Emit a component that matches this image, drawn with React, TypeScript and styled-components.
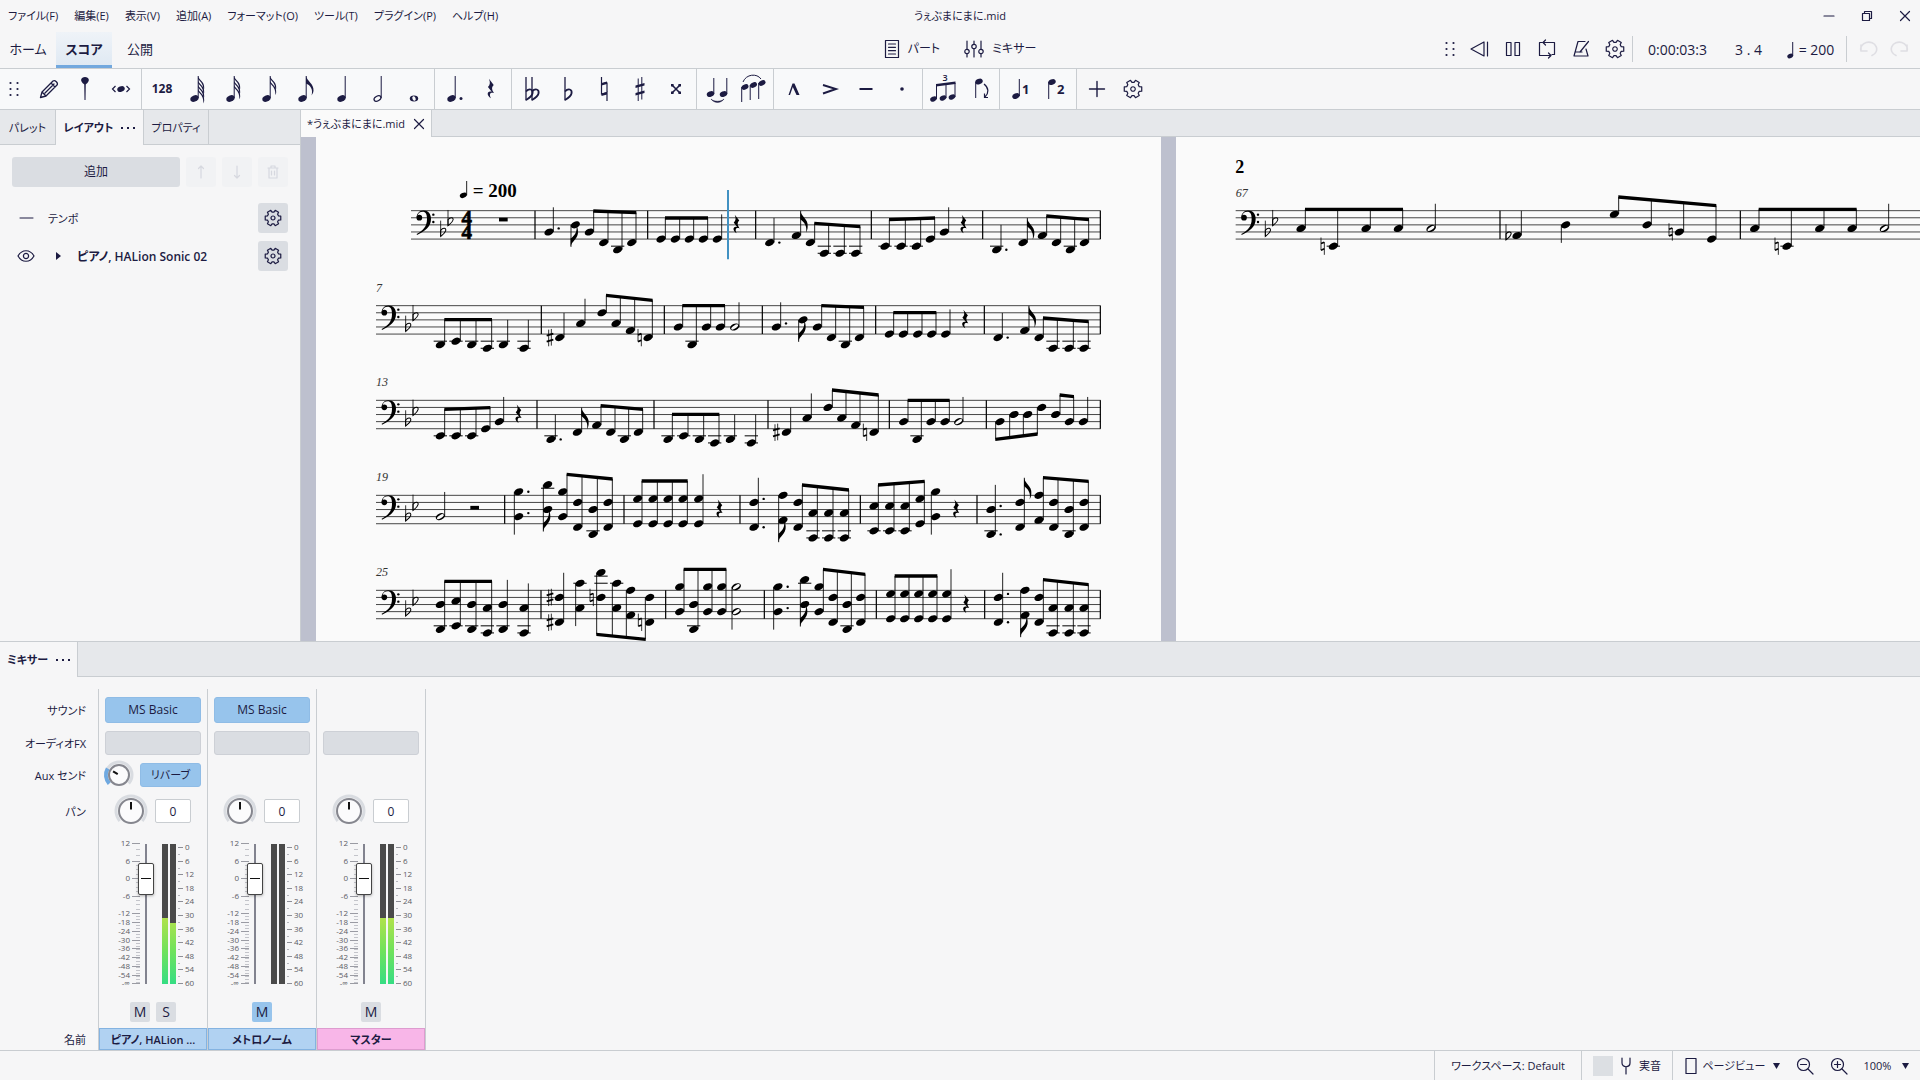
import React from "react";
import styled, { createGlobalStyle, css } from "styled-components";

const ink = "#1c1b42";
const line = "#c9cdd1";
const surface = "#f6f6f7";
const strip = "#e6e8eb";
const accent = "#97c4ec";
const soft = "#dadde2";

const Global = createGlobalStyle`
  * { box-sizing: border-box; }
  body {
    margin: 0;
    background: ${surface};
    color: ${ink};
    font: 12px/16px "Open Sans", "Noto Sans CJK JP", sans-serif;
    font-feature-settings: "palt";
    overflow: hidden;
  }
  button, input, select { font: inherit; font-feature-settings: inherit; color: inherit; }
  button { border: 0; padding: 0; background: none; cursor: pointer; }
  svg { display: block; flex: none; overflow: visible; }
`;

const App_ = styled.div`
  display: flex;
  flex-direction: column;
  height: 100vh;
`;

/* ---------- header ---------- */

const ThreePart = styled.header<{ $h: number; $line?: boolean }>`
  display: grid;
  grid-template-columns: 1fr auto 1fr;
  align-items: center;
  height: ${(p) => p.$h}px;
  flex: none;
  font-size: 11px;
  ${(p) => p.$line && css`border-bottom: 1px solid ${line};`}
`;
const MenuList = styled.nav`
  display: flex;
  gap: 16px;
  padding-left: 8px;
`;
const MenuItem = styled.button`
  white-space: nowrap;
`;
const WindowButtons = styled.div`
  display: flex;
  justify-content: flex-end;
`;
const WindowButton = styled.button`
  display: grid;
  place-items: center;
  width: 38px;
  height: 30px;
  &:last-child {
    width: 34px;
    padding-left: 4px;
  }
`;
const PageTabs = styled.nav`
  display: flex;
  align-self: stretch;
`;
const PageTab = styled.a<{ $on?: boolean }>`
  display: grid;
  place-items: center;
  width: 56px;
  font-size: 13px;
  color: inherit;
  text-decoration: none;
  font-weight: ${(p) => (p.$on ? 600 : 400)};
  border-bottom: 3px solid ${(p) => (p.$on ? "#72a8de" : "transparent")};
  background: ${(p) => (p.$on ? "linear-gradient(#eff3f8, #dfe9f3)" : "none")};
`;
const PanelToggles = styled.div`
  display: flex;
  gap: 24px;
  padding-bottom: 2px;
`;
const PanelToggle = styled.button`
  display: flex;
  align-items: center;
  gap: 8px;
  font-size: 12px;
`;
const Transport = styled.div`
  display: flex;
  align-items: center;
  justify-content: flex-end;
  padding: 0 6px 2px 0;
`;
const TransportButton = styled.button<{ $w?: number; $off?: boolean }>`
  display: grid;
  place-items: center;
  width: ${(p) => p.$w ?? 34}px;
  height: 30px;
  opacity: ${(p) => (p.$off ? 0.1 : 1)};
`;
const Rule = styled.span<{ $after?: number }>`
  width: 1px;
  height: 26px;
  margin-right: ${(p) => p.$after ?? 0}px;
  background: ${line};
`;
const Readout = styled.span<{ $w: number }>`
  display: flex;
  align-items: center;
  justify-content: center;
  gap: 4px;
  width: ${(p) => p.$w}px;
  padding-top: 2px;
  font-size: 14px;
  white-space: pre;
`;

/* ---------- note toolbar ---------- */

const Toolbar = styled.div`
  display: flex;
  flex: none;
  height: 41px;
  border-bottom: 1px solid ${line};
`;
const ToolGroup = styled.div<{ $last?: boolean }>`
  display: flex;
  padding: 0 2px;
  border-right: ${(p) => (p.$last ? 0 : 1)}px solid ${line};
  background: #f8f9fa;
  &:first-child { padding-left: 0; }
  ${(p) => p.$last && css`background: none;`}
`;
const ToolButton = styled.button<{ $narrow?: boolean }>`
  display: grid;
  place-items: center;
  width: ${(p) => (p.$narrow ? 31 : 36)}px;
  padding-right: ${(p) => (p.$narrow ? 3 : 0)}px;
  font-weight: 700;
`;

/* ---------- work area ---------- */

const Work = styled.main`
  display: flex;
  flex: 1;
  min-height: 0;
`;
const Side = styled.aside`
  width: 301px;
  flex: none;
  border-right: 1px solid ${line};
`;
const TabBar = styled.div<{ $h: number }>`
  display: flex;
  flex: none;
  height: ${(p) => p.$h}px;
  background: linear-gradient(${line}, ${line}) bottom / 100% 1px no-repeat ${strip};
`;
const Tab = styled.button<{ $on?: boolean; $w: number }>`
  display: flex;
  align-items: center;
  justify-content: center;
  gap: 8px;
  width: ${(p) => p.$w}px;
  border-right: 1px solid ${line};
  white-space: nowrap;
  font-size: 11px;
  font-weight: ${(p) => (p.$on ? 600 : 400)};
  background: ${(p) => (p.$on ? surface : "none")};
`;
const DocumentTab = styled(Tab)`
  background: #fafafa;
`;
const SideActions = styled.div`
  display: flex;
  gap: 6px;
  padding: 12px;
`;
const AddButton = styled.button`
  flex: 1;
  height: 30px;
  border-radius: 3px;
  background: ${soft};
`;
const SquareButton = styled.button<{ $off?: boolean }>`
  display: grid;
  place-items: center;
  width: 30px;
  height: 30px;
  border-radius: 3px;
  background: ${(p) => (p.$off ? "#f1f2f4" : soft)};
  color: ${(p) => (p.$off ? "#d6d8df" : ink)};
`;
const LayerRow = styled.div`
  display: flex;
  align-items: center;
  height: 38px;
  padding: 0 12px 0 16px;
`;
const RowIcon = styled.button<{ $w: number }>`
  display: grid;
  place-items: center start;
  width: ${(p) => p.$w}px;
  height: 30px;
`;
const LayerName = styled.span<{ $bold?: boolean }>`
  flex: 1;
  padding-top: 2px;
  font-size: ${(p) => (p.$bold ? 12 : 11)}px;
  font-weight: ${(p) => (p.$bold ? 600 : 400)};
`;
const Editor = styled.section`
  display: flex;
  flex-direction: column;
  flex: 1;
  min-width: 0;
`;
const Desk = styled.div`
  display: flex;
  flex: 1;
  min-height: 0;
  gap: 15px;
  padding-left: 15px;
  overflow: hidden;
  background: #bdc0ce;
`;
const Paper = styled.article<{ $rest?: boolean }>`
  overflow: hidden;
  background: #fafafa;
  ${(p) => (p.$rest ? css`flex: 1;` : css`flex: none;`)}
`;

/* ---------- mixer ---------- */

const MixerPanel = styled.section`
  display: flex;
  flex-direction: column;
  flex: none;
  border-top: 1px solid ${line};
`;
const MixerBody = styled.div`
  display: flex;
  padding-top: 12px;
`;
const columnRows = css`
  display: grid;
  grid-template-columns: minmax(0, 1fr);
  grid-template-rows: 34px 32px 32px 40px 165px 32px 22px;
  align-items: center;
  padding-top: 4px;
`;
const Labels = styled.div`
  ${columnRows}
  width: 99px;
  padding-right: 12px;
  font-size: 11px;
  text-align: right;
  white-space: nowrap;
  border-right: 1px solid ${line};
  span { padding-top: 2px; }
`;
const Channel = styled.div`
  ${columnRows}
  width: 109px;
  border-right: 1px solid ${line};
`;
const Cell = styled.div<{ $gap?: number }>`
  display: flex;
  align-items: center;
  justify-content: center;
  gap: ${(p) => p.$gap ?? 0}px;
  padding: 0 6px;
`;
const Slot = styled.button<{ $tone: "blue" | "grey"; $h: number; $w?: number }>`
  width: ${(p) => p.$w ?? 96}px;
  height: ${(p) => p.$h}px;
  border: 1px solid ${(p) => (p.$tone === "blue" ? "#8fbce6" : "#cdd0d6")};
  border-radius: 3px;
  background: ${(p) => (p.$tone === "blue" ? accent : soft)};
  font-size: ${(p) => (p.$w ? 11 : 12)}px;
`;
const KnobBox = styled.label`
  position: relative;
  display: block;
`;
const KnobInput = styled.input`
  position: absolute;
  inset: 0;
  width: 100%;
  height: 100%;
  margin: 0;
  opacity: 0;
`;
const PanValue = styled.input`
  width: 36px;
  height: 24px;
  padding: 0;
  border: 1px solid ${line};
  border-radius: 2px;
  background: #fff;
  text-align: center;
`;
const FaderCell = styled.div`
  display: flex;
  align-items: center;
  padding-left: 17px;
`;
const Fader = styled.input`
  appearance: none;
  writing-mode: vertical-lr;
  direction: rtl;
  width: 16px;
  height: 140px;
  margin: 0 8px 0 -2px;
  background: linear-gradient(#82838f, #82838f) center / 2px 100% no-repeat;
  &::-webkit-slider-thumb {
    appearance: none;
    width: 16px;
    height: 32px;
    border: 1px solid #444;
    border-radius: 2px;
    background: linear-gradient(#111, #111) center / 10px 1px no-repeat #fff;
    box-shadow: 0 1px 3px rgba(0, 0, 0, 0.3);
  }
`;
const ScaleText = styled.text`
  font-size: 8px;
  fill: #5b5c65;
`;
const SmallToggle = styled.button<{ $on?: boolean }>`
  width: 20px;
  height: 20px;
  border-radius: 2px;
  font-size: 14px;
  line-height: 20px;
  background: ${(p) => (p.$on ? accent : soft)};
`;
const ChannelName = styled.div<{ $pink?: boolean }>`
  height: 22px;
  padding: 0 8px;
  border: 1px solid ${(p) => (p.$pink ? "#dd9ccf" : "#84b3e1")};
  background: ${(p) => (p.$pink ? "#f8b6e8" : "#b1d2f2")};
  font-size: 11px;
  font-weight: 600;
  line-height: 21px;
  text-align: center;
  white-space: nowrap;
`;

/* ---------- status bar ---------- */

const Status = styled.footer`
  display: flex;
  justify-content: flex-end;
  flex: none;
  height: 30px;
  font-size: 11px;
  border-top: 1px solid ${line};
`;
const StatusPart = styled.div<{ $w: number; $gap: number }>`
  display: flex;
  align-items: center;
  justify-content: center;
  gap: ${(p) => p.$gap}px;
  width: ${(p) => p.$w}px;
  white-space: nowrap;
  border-left: 1px solid ${line};
`;
const Swatch = styled.span`
  width: 20px;
  height: 20px;
  background: #dcdfe3;
`;
const DropLabel = styled.label<{ $gap: number }>`
  display: flex;
  align-items: center;
  gap: ${(p) => p.$gap}px;
`;
const Drop = styled.select`
  appearance: none;
  border: 0;
  padding: 0;
  background: none;
`;

/* ---------- interface icons ---------- */

const Svg = ({ w, h = w, children, sw = 1.2 }: { w: number; h?: number; sw?: number; children: React.ReactNode }) => (
  <svg width={w} height={h} viewBox={`${-w / 2} ${-h / 2} ${w} ${h}`} fill="none" stroke="currentColor" strokeWidth={sw} strokeLinecap="round" strokeLinejoin="round" aria-hidden>
    {children}
  </svg>
);

const gearPath = (r: number) => {
  const pts: string[] = [];
  for (let k = 0; k < 6; k++) {
    [[-21, 0.74], [-14, 1], [14, 1], [21, 0.74]].forEach(([d, f]) => {
      const a = ((k * 60 + d) * Math.PI) / 180;
      pts.push(`${(Math.cos(a) * r * f).toFixed(2)},${(Math.sin(a) * r * f).toFixed(2)}`);
    });
  }
  return `M${pts.join("L")}Z`;
};
const Gear = ({ r = 8 }: { r?: number }) => (
  <Svg w={20}><path d={gearPath(r)} /><circle r={r / 4} /></Svg>
);
const Grip = () => (
  <svg width="10" height="16" viewBox="-5 -8 10 16" fill={ink} aria-hidden>
    {[-3.5, 3.5].map((x) => [-6, 0, 6].map((y) => <circle key={`${x}${y}`} cx={x} cy={y} r="1.1" />))}
  </svg>
);
const Dots = () => (
  <svg width="14" height="4" viewBox="0 0 14 4" fill={ink} aria-hidden>
    <rect x="0" y="1" width="2" height="2" /><rect x="6" y="1" width="2" height="2" /><rect x="12" y="1" width="2" height="2" />
  </svg>
);
const Caret = () => (
  <svg width="7" height="6" viewBox="0 0 7 6" fill={ink} aria-hidden><path d="M0 0H7L3.5 6Z" /></svg>
);
const Cross = () => <Svg w={12}><path d="M-4.500-4.500L4.500 4.500M4.500-4.500L-4.500 4.500" /></Svg>;

/* Toolbar note glyphs share one 32px box centred on the button. */
const Glyph = ({ children }: { children: React.ReactNode }) => (
  <svg width="32" height="32" viewBox="-16 -16 32 32" fill={ink} stroke="none" aria-hidden>{children}</svg>
);
const Head = ({ x, y, s = 1 }: { x: number; y: number; s?: number }) => (
  <ellipse rx={4.3 * s} ry={3 * s} transform={`translate(${x} ${y}) rotate(-24)`} />
);
const Stem = ({ x, a, b }: { x: number; a: number; b: number }) => <rect x={x - 0.5} y={a} width="1" height={b - a} />;

const FlaggedNote = ({ flags }: { flags: number }) => (
  <Glyph>
    <Head x={-3.5} y={9.5} />
    <Stem x={0.2} a={-13} b={9} />
    {flags === 1 ? (
      <path d="M0-13C1-8 8-5 7.500 1.500C7.400 3.500 6.500 5 5.500 6.500C7.500 0 4-4 0-5.500Z" />
    ) : (
      Array.from({ length: flags }, (_, i) => (
        <path key={i} d={`M0 ${-13 + i * 4.2}c.6 4 6.600 5 6.200 12c-.2 1.500-.4 2-.8 2.800c.2-6-2-8.500-5.400-11.800z`} />
      ))
    )}
  </Glyph>
);
const restPath = "M-6-30L8-12C1-5 2 1 9 12C-1 8-7 14 0 27C-15 18-11 3 2 8L-9-6C-2-12-2-20-6-30Z";
const flatBowl = "M0-1C4-6 9-4.500 8-.5C7 3.500 3 6 0 8.500Z";

const Flat = ({ x = 0 }: { x?: number }) => (
  <g transform={`translate(${x} 2)`} fill="none" stroke={ink} strokeWidth="1.300">
    <path d="M-3-14V9.500" /><path d="M-3 .5C0-3 4.500-2 3.500 2.500C3 5-.5 7.500-3 9" strokeWidth="1.800" />
  </g>
);

const tools: { name: string; icon: React.ReactNode }[][] = [
  [
    { name: "音符入力", icon: <Svg w={22} sw={1.3}><path d="M-8.500 8.500L-7 3L4-8C6-9.500 9.500-6 8-4L-3 7ZM-7 3L-3 7M-4 4L5-5M2-6L6-2" /></Svg> },
    { name: "ピン", icon: <Glyph><path d="M0 11.500L-.5-4.500C-6-8-4-12 0-12S6-8 .5-4.500Z" /><Stem x={0} a={-5} b={11} /></Glyph> },
    { name: "リズム", icon: <Glyph><Head x={0} y={0} s={0.9} /><path d="M-5.500-3L-8.500 0L-5.500 3M5.500-3L8.500 0L5.500 3" fill="none" stroke={ink} strokeWidth="1.200" /></Glyph> },
  ],
  [
    { name: "128分音符", icon: "128" },
    { name: "64分音符", icon: <FlaggedNote flags={4} /> },
    { name: "32分音符", icon: <FlaggedNote flags={3} /> },
    { name: "16分音符", icon: <FlaggedNote flags={2} /> },
    { name: "8分音符", icon: <FlaggedNote flags={1} /> },
    { name: "4分音符", icon: <Glyph><Head x={-0.5} y={9.5} /><Stem x={3.2} a={-13} b={9} /></Glyph> },
    { name: "2分音符", icon: <Glyph><ellipse rx="3.700" ry="2.400" transform="translate(-.5 9.500) rotate(-30)" fill="none" stroke={ink} strokeWidth="1.200" /><Stem x={3.2} a={-13} b={9} /></Glyph> },
    { name: "全音符", icon: <Glyph><ellipse cy="9.500" rx="4.200" ry="2.900" /><ellipse cy="9.500" rx="1.600" ry="2.400" transform="rotate(-20 0 9.500)" fill="#f8f9fa" /></Glyph> },
  ],
  [
    { name: "付点", icon: <Glyph><Head x={-3.5} y={9.5} /><Stem x={0.2} a={-13} b={9} /><circle cx="6" cy="9.500" r="1.500" /></Glyph> },
    { name: "休符", icon: <Glyph><path d={restPath} transform="scale(.34)" /></Glyph> },
  ],
  [
    { name: "ダブルフラット", icon: <Glyph><Flat x={-3} /><Flat x={3} /></Glyph> },
    { name: "フラット", icon: <Glyph><Flat /></Glyph> },
    { name: "ナチュラル", icon: <Glyph><path d="M-2.500-12V5L3 3.500V12M3-6.500V3.500M-2.500-5L3-6.500" fill="none" stroke={ink} strokeWidth="1.200" /><path d="M-2.500-6L3-7.500V-5L-2.500-3.500ZM-2.500 4.500L3 3V5.500L-2.500 7Z" /></Glyph> },
    { name: "シャープ", icon: <Glyph><Stem x={-1.8} a={-10.5} b={12} /><Stem x={1.8} a={-12} b={10.5} /><path d="M-4.500-3.500L4.500-6V-3.500L-4.500-1ZM-4.500 4L4.500 1.500V4L-4.500 6.500Z" /></Glyph> },
    { name: "ダブルシャープ", icon: <Glyph><path d="M-4-4L4 4M4-4L-4 4" stroke={ink} strokeWidth="1.600" /><path d="M-5-5h2.600v2.600h-2.600zM2.400-5h2.600v2.600h-2.600zM-5 2.400h2.600v2.600h-2.600zM2.400 2.400h2.600v2.600h-2.600z" /></Glyph> },
  ],
  [
    { name: "タイ", icon: <Glyph><Head x={-6.5} y={5} s={0.9} /><Stem x={-3.2} a={-11} b={5} /><Head x={6.5} y={5} s={0.9} /><Stem x={9.8} a={-11} b={5} /><path d="M-6 10C-3 14.500 4 14.500 7 10C4 13 -3 13 -6 10Z" stroke={ink} strokeWidth=".5" /></Glyph> },
    { name: "スラー", icon: <Glyph><Head x={-8} y={-2} s={0.85} /><Head x={0.5} y={-4} s={0.85} /><Head x={9} y={-6} s={0.85} /><Stem x={-11.3} a={-2} b={13} /><Stem x={-2.8} a={-4} b={11} /><Stem x={5.7} a={-6} b={10} /><path d="M-10-7C-7-15 4-16 8-10" fill="none" stroke={ink} /></Glyph> },
  ],
  [
    { name: "マルカート", icon: <Glyph><path d="M-5.500 6L-1.500-5.500H.5L5.500 6H2.500L-1.200-2L-4 6Z" /></Glyph> },
    { name: "アクセント", icon: <Glyph><path d="M-7-4L6 0L-7 4.500" fill="none" stroke={ink} strokeWidth="1.900" /></Glyph> },
    { name: "テヌート", icon: <Glyph><rect x="-6.500" y="-1" width="13" height="2" /></Glyph> },
    { name: "スタッカート", icon: <Glyph><circle r="1.800" /></Glyph> },
  ],
  [
    { name: "連符", icon: <Glyph><Head x={-9.500} y={10} s={0.8} /><Head x={0} y={9} s={0.8} /><Head x={9} y={8} s={0.8} /><Stem x={-6.5} a={-4} b={10} /><Stem x={3} a={-5} b={9} /><Stem x={12} a={-6} b={8} /><path d="M-7-5L12.500-7.500V-5L-7-2.500Z" /><text x="2" y="-8" fontSize="9" fontWeight="600" textAnchor="middle">3</text></Glyph> },
    { name: "上下反転", icon: <Glyph><Head x={0} y={-7.500} s={0.9} /><Stem x={-3.3} a={-7} b={9} /><path d="M5-5C10-1 10 4 6 8M5.500 4.500V8.500H9" fill="none" stroke={ink} strokeWidth="1.200" /></Glyph> },
  ],
  [
    { name: "声部1", icon: <Glyph><Head x={-4} y={7} s={0.9} /><Stem x={-0.7} a={-10} b={7} /><text x="2" y="5" fontSize="13" fontWeight="700">1</text></Glyph> },
    { name: "声部2", icon: <Glyph><Head x={-4} y={-7} s={0.9} /><Stem x={-7.3} a={-7} b={10} /><text x="1" y="5" fontSize="13" fontWeight="700">2</text></Glyph> },
  ],
  [
    { name: "追加", icon: <Svg w={18} sw={1.4}><path d="M-7.500 0H7.500M0-7.500V7.500" /></Svg> },
    { name: "設定", icon: <Gear r={9} /> },
  ],
];

/* ---------- engraving ---------- */

/* Score units are a third of a pixel. A staff space is 21.3 units and
   pitches count half spaces upwards from the bottom staff line. */
const SPACE = 21.3;
const yOf = (p: number) => 4 * SPACE - (p * SPACE) / 2;
const STEM = 74;
const SIDE = 13;

const Notehead = ({ x, p, hollow }: { x: number; p: number; hollow?: boolean }) => {
  const ledgers: number[] = [];
  for (let l = -2; l >= p; l -= 2) ledgers.push(l);
  for (let l = 10; l <= p; l += 2) ledgers.push(l);
  return (
    <g>
      {ledgers.map((l) => <path key={l} d={`M${x - 20} ${yOf(l)}h40`} stroke="#000" strokeWidth="3" />)}
      <g transform={`translate(${x} ${yOf(p)}) rotate(-24)`}>
        <ellipse rx="14.500" ry="9.800" />
        {hollow && <ellipse rx="12" ry="4.500" transform="rotate(-10)" fill="#fafafa" />}
      </g>
    </g>
  );
};

const VLine = ({ x, a, b, w = 2.6 }: { x: number; a: number; b: number; w?: number }) => (
  <path d={`M${x} ${a}V${b}`} stroke="#000" strokeWidth={w} />
);

const Accidental = ({ kind, x, p }: { kind: string; x: number; p: number }) => (
  <g transform={`translate(${x} ${yOf(p)})`} fill="none" stroke="#000" strokeWidth="2.400">
    {kind === "b" && <g><path d="M-7-34V13" /><path d={flatBowl} transform="translate(-7 -3) scale(1.900)" strokeWidth="1.600" /></g>}
    {kind === "n" && <g><path d="M-5-26V12M5-12V26" /><path d="M-5-8L5-12M-5 12L5 8" strokeWidth="5" /></g>}
    {kind === "#" && <g><path d="M-4-24V26M4-26V24" /><path d="M-10-6L10-12M-10 12L10 6" strokeWidth="5.500" /></g>}
  </g>
);

const parseNote = (s: string) => {
  const dot = s.endsWith(".");
  const [x, ps] = s.replace(/\.$/, "").split(":");
  return { x: Number(x), ps: ps.split("+").map(Number), dot };
};

/* One item of notation. First letter: | bar, r/W/V rests, # n b accidentals,
   q/h/e stem up, Q/H/E stem down, U/D beamed group with its two beam heights. */
const Mark = ({ src }: { src: string }) => {
  const k = src[0];
  const rest = src.slice(1);
  if (k === "|") return <VLine x={Number(rest)} a={0} b={4 * SPACE} w={3.6} />;
  if (k === "r") return <path d={restPath} transform={`translate(${rest} ${2 * SPACE - 1}) scale(.98)`} />;
  if (k === "W") return <rect x={Number(rest) - 13} y={SPACE} width="26" height="11" />;
  if (k === "V") return <rect x={Number(rest) - 13} y={2 * SPACE - 11} width="26" height="11" />;
  if (k === "#" || k === "n" || k === "b") {
    const n = parseNote(rest);
    return <>{n.ps.map((p) => <Accidental key={p} kind={k} x={n.x} p={p} />)}</>;
  }
  if (k === "U" || k === "D") {
    const [, y1, y2, ...ns] = src.split(" ");
    const notes = ns.map(parseNote);
    const dx = k === "U" ? SIDE : -SIDE;
    const a = notes[0].x + dx;
    const b = notes[notes.length - 1].x + dx;
    const at = (x: number) => Number(y1) + ((Number(y2) - Number(y1)) * (x - a)) / (b - a);
    return (
      <g>
        {notes.map((n) => (
          <g key={n.x}>
            {n.ps.map((p) => <Notehead key={p} x={n.x} p={p} />)}
            <VLine x={n.x + dx} a={at(n.x + dx)} b={yOf(k === "U" ? Math.min(...n.ps) : Math.max(...n.ps))} />
          </g>
        ))}
        <path d={`M${a - 1} ${Number(y1) - 5}L${b + 1} ${Number(y2) - 5}v10L${a - 1} ${Number(y1) + 5}Z`} />
      </g>
    );
  }
  const n = parseNote(rest);
  const up = k === k.toLowerCase();
  const lo = yOf(Math.min(...n.ps));
  const hi = yOf(Math.max(...n.ps));
  const sx = n.x + (up ? SIDE : -SIDE);
  const end = up ? Math.min(hi - STEM, 2 * SPACE) : lo + (k === "E" ? 66 : 54);
  return (
    <g>
      {n.ps.map((p) => <Notehead key={p} x={n.x} p={p} hollow={k.toLowerCase() === "h"} />)}
      <VLine x={sx} a={up ? end : hi} b={up ? lo : end} />
      {k.toLowerCase() === "e" && (
        <path d="M0 0C2 16 24 26 22 46C22 54 20 60 17 65C21 46 12 34 0 25Z" transform={`translate(${sx - 1} ${end}) scale(1 ${up ? 1 : -1})`} />
      )}
      {n.dot && n.ps.map((p) => <circle key={p} cx={n.x + 29} cy={yOf(p % 2 === 0 ? p + 1 : p)} r="3.600" />)}
    </g>
  );
};

type Part = { at: number; marks: string[] };
const System = ({ y, x1, x2, parts, number, clefX }: { y: number; x1: number; x2: number; parts: Part[]; number?: string; clefX: number }) => (
  <g transform={`translate(0 ${y})`}>
    {[0, 1, 2, 3, 4].map((i) => <path key={i} d={`M${x1} ${i * SPACE}H${x2}`} stroke="#222" strokeWidth="2.500" />)}
    {number && <text x={x1} y="-42" fontSize="36" fontStyle="italic" fontFamily="Liberation Serif, serif" fill="#333">{number}</text>}
    <g transform={`translate(${clefX} 0)`}>
      <circle cx="8" cy="21" r="8.500" />
      <path d="M0 20C0 8 9-.5 20-.5C35-.5 43 9 43 25C43 48 25 62 1 73L0 70C19 60 31 48 31 25C31 10 27 3 18 3C10 3 4 8 3 14Z" />
      <circle cx="50" cy="12" r="3.600" /><circle cx="50" cy="34" r="3.600" />
      <Accidental kind="b" x={79} p={2} />
      <Accidental kind="b" x={101} p={5} />
    </g>
    {parts.map((part) => (
      <g key={part.at} transform={`translate(${part.at} 0)`}>
        {part.marks.map((m) => <Mark key={m} src={m} />)}
      </g>
    ))}
  </g>
);

const L = 162;
const R = 1302;
const firstPage = [
  { y: 221, x1: 285, parts: [
    { at: L, marks: ["W400", "|495", "q537:2.", "E616:4", "U 1 6 658:2 701:-1 743:-3 785:-1", "|833", "U 22 22 873:0 916:0 958:0 1000:0", "q1042:0", "r1100", "|1157"] },
    { at: R, marks: ["q59:-1.", "e139:1", "U 38 48 181:-1 223:-4 270:-4 317:-4", "|364", "U 27 22 405:-2 453:-2 499:-2 541:0", "q583:2", "r641", "|698", "q740:-3.", "e819:-1", "U 16 27 877:1 919:-1 961:-3 1003:-1", "|1051"] },
  ] },
  { y: 506, x1: 180, number: "7", parts: [
    { at: L, marks: ["U 42 42 211:-3 258:-2 305:-3 352:-4", "q400:-3", "q462:-4", "|514", "#540:-1", "q569:-1", "q632:3", "U -31 -16 696:6 738:3 781:1 834:-1", "n809:-1", "|883", "U 0 0 925:2 966:-3 1009:2 1051:2", "h1094:2", "|1177"] },
    { at: R, marks: ["q79:2.", "E159:4", "U 0 5 202:2 244:-1 286:-3 328:-1", "|377", "U 21 21 418:0 460:0 503:0 545:0", "q587:0", "r646", "|703", "q744:-1.", "e824:1", "U 37 48 867:-1 909:-4 957:-4 1002:-4", "|1051"] },
  ] },
  { y: 790, x1: 180, number: "13", parts: [
    { at: L, marks: ["U 27 22 211:-2 258:-2 305:-2 347:0", "q388:2", "r446", "|501", "q543:-3.", "e622:-1", "U 16 27 680:1 722:-1 763:-3 805:-1", "|852", "U 42 42 894:-3 941:-2 988:-3 1034:-4", "q1081:-3", "q1144:-4", "|1194"] },
    { at: R, marks: ["#79:-1", "q109:-1", "q171:3", "U -31 -16 234:6 275:3 317:1 372:-1", "n345:-1", "|418", "U 0 0 461:2 501:-3 543:2 585:2", "h626:2", "|709", "D 117 101 750:2 792:4 833:4 875:6", "U -16 -11 917:4 958:2", "q1000:2", "|1051"] },
  ] },
  { y: 1075, x1: 180, number: "19", parts: [
    { at: L, marks: ["h211:2", "V314", "|404", "Q446:2+9.", "E533:4+11", "U -63 -49 578:2+9 623:-1+6 669:-3+4 714:-1+6", "|762", "U -43 -43 803:0+7 849:0+7 894:0+7 939:0+7", "q986:0+7", "r1049", "|1110", "q1152:-1+6."] },
    { at: R, marks: ["E99:1+8", "U -31 -16 144:-1+6 189:-4+3 236:-4+3 283:-4+3", "|331", "U -31 -42 372:-2+5 419:-2+5 465:-2+5 510:0+7", "Q557:2+9", "r619", "|681", "q723:-3+4.", "e810:-1+6", "U -53 -42 867:1+8 911:-1+6 957:-3+4 1002:-1+6", "|1051"] },
  ] },
  { y: 1360, x1: 180, number: "25", parts: [
    { at: L, marks: ["U -27 -27 211:-3+4 258:-2+5 305:-3+4 352:-4+3", "q399:-3+4", "q462:-4+3", "|513", "#540:-1+6", "q568:-1+6", "Q630:3+10", "n665:6", "D 132 147 693:6+13 740:3+10 782:1+8 839:-1+6", "n810:-1", "|887", "U -63 -63 929:2+9 971:-3+4 1013:2+9 1055:2+9", "H1099:2+9", "|1183"] },
    { at: R, marks: ["Q84:2+9.", "E164:4+11", "U -63 -48 207:2+9 249:-1+6 291:-3+4 332:-1+6", "|379", "U -43 -43 422:0+7 464:0+7 506:0+7 548:0+7", "q590:0+7", "r649", "|704", "q745:-1+6.", "E825:1+8", "U -32 -17 867:-1+6 909:-4+3 957:-4+3 1002:-4+3", "|1051"] },
  ] },
];
const secondPage: Part[] = [
  { at: -63, marks: ["U -4 -4 438:3 535:-2 633:3 730:3", "n503:-2", "h828:3"] },
  { at: 672, marks: ["|300", "b325:1", "q351:1", "Q497:4", "U -41 -15 643:7 741:4 838:2 935:0", "n812:2", "|1021", "U -4 -4 1064:3 1161:-2 1259:3 1356:3", "n1130:-2", "h1453:3"] },
];

const bold = { fontFamily: "Liberation Serif, serif", fontWeight: 700 };

const ScorePageOne = () => (
  <svg width="845" height="504" viewBox="0 0 2535 1512" role="img" aria-label="1ページ">
    <g transform="translate(442 175)">
      <ellipse rx="11" ry="7.500" transform="rotate(-24)" />
      <VLine x={10} a={-43} b={0} />
      <text x="28" y="6" fontSize="57" {...bold}>= 200</text>
    </g>
    {firstPage.map((s) => <System key={s.y} y={s.y} x1={s.x1} x2={2354} clefX={s.x1 + 17} number={s.number} parts={s.parts} />)}
    <g fontSize="63" textAnchor="middle" stroke="#000" strokeWidth="2" {...bold}>
      <text x="452" y="263">4</text>
      <text x="452" y="306">4</text>
    </g>
    <path d="M1236 159V367" stroke="#4191c2" strokeWidth="6" />
  </svg>
);
const ScorePageTwo = () => (
  <svg width="900" height="504" viewBox="0 0 2700 1512" role="img" aria-label="2ページ">
    <text x="178" y="108" fontSize="54" {...bold}>2</text>
    <System y={221} x1={179} x2={2700} clefX={196} number="67" parts={secondPage} />
  </svg>
);

/* ---------- mixer parts ---------- */

const gainMarks: [string, number][] = [["12", 3], ["6", 21], ["0", 38], ["-6", 56], ["-12", 73], ["-18", 82], ["-24", 91], ["-30", 100], ["-36", 108], ["-42", 117], ["-48", 126], ["-54", 135], ["-∞", 143]];
const gainMinor = [9, 15, 25, 29, 34, 42, 47, 51, 60, 64, 69];
for (let y = 76; y < 143; y += 3) gainMinor.push(y);

const GainScale = () => (
  <svg width="24" height="147" viewBox="0 0 24 147" aria-hidden>
    {gainMinor.map((y) => <path key={y} d={`M20 ${y + 0.5}h4`} stroke="#c3c4ca" />)}
    {gainMarks.map(([t, y]) => (
      <g key={t}>
        <path d={`M16 ${y + 0.5}h8`} stroke="#9a9ba3" />
        <ScaleText x="14" y={y + 3} textAnchor="end">{t}</ScaleText>
      </g>
    ))}
  </svg>
);
const MeterScale = () => (
  <svg width="22" height="147" viewBox="0 0 22 147" aria-hidden>
    {Array.from({ length: 11 }, (_, i) => {
      const y = Math.round(7 + i * 13.6);
      return (
        <g key={i}>
          <path d={`M2 ${y + 0.5}h5`} stroke="#8d8e96" />
          {i < 10 && <path d={`M2 ${y + 7.5}h2`} stroke="#b5b6bd" />}
          <ScaleText x="9" y={y + 3}>{i * 6}</ScaleText>
        </g>
      );
    })}
  </svg>
);
const Meter = ({ levels }: { levels: number[] }) => (
  <svg width="14" height="140" viewBox="0 0 14 140" aria-hidden>
    <defs>
      <linearGradient id="level" x1="0" y1="74" x2="0" y2="140" gradientUnits="userSpaceOnUse">
        <stop offset="0" stopColor="#b0e24c" /><stop offset=".5" stopColor="#6fe25c" /><stop offset="1" stopColor="#35dd83" />
      </linearGradient>
    </defs>
    {levels.map((l, i) => (
      <g key={i}>
        <rect x={i * 8} width="6" height="140" fill="#4a4a4a" />
        <rect x={i * 8} y={140 - l} width="6" height={l} fill="url(#level)" />
      </g>
    ))}
  </svg>
);
const Knob = ({ r, angle, label, arc }: { r: number; angle: number; label: string; arc?: boolean }) => {
  const o = r + 2;
  return (
    <KnobBox>
      <svg width={2 * o + 2} height={2 * o + 2} viewBox={`${-o - 1} ${-o - 1} ${2 * o + 2} ${2 * o + 2}`} aria-hidden>
        <path d={`M${-o * 0.75} ${o * 0.66}A${o} ${o} 0 1 1 ${o * 0.75} ${o * 0.66}`} fill="none" stroke="#d9dce1" strokeWidth="3" />
        {arc && <path d={`M${-o * 0.75} ${o * 0.66}A${o} ${o} 0 0 1 ${-o * 0.87} ${-o * 0.5}`} fill="none" stroke="#6ea8e0" strokeWidth="4" />}
        <circle r={r - 1} fill="#fbfbfc" stroke="#85868e" strokeWidth="2" />
        <path d={`M0 ${-r + 4}V-1.500`} stroke="#111" strokeWidth="2" transform={`rotate(${angle})`} />
      </svg>
      <KnobInput type="range" min={-60} max={60} defaultValue={0} aria-label={label} />
    </KnobBox>
  );
};

type ChannelData = { name: string; sound?: string; aux?: string; levels: number[]; solo?: boolean; muted?: boolean; pink?: boolean };
const channels: ChannelData[] = [
  { name: "ピアノ, HALion ...", sound: "MS Basic", aux: "リバーブ", levels: [66, 61], solo: true },
  { name: "メトロノーム", sound: "MS Basic", levels: [0, 0], muted: true },
  { name: "マスター", levels: [66, 66], pink: true },
];

const ChannelStrip = ({ c }: { c: ChannelData }) => (
  <Channel>
    <Cell>{c.sound && <Slot $tone="blue" $h={26}>{c.sound}</Slot>}</Cell>
    <Cell><Slot $tone="grey" $h={24} aria-label={`${c.name} オーディオFX`} /></Cell>
    <Cell $gap={7}>
      {c.aux && <><Knob r={11} angle={-58} arc label={`${c.name} Aux`} /><Slot $tone="blue" $h={24} $w={61}>{c.aux}</Slot></>}
    </Cell>
    <Cell $gap={8}>
      <Knob r={13} angle={0} label={`${c.name} パン`} />
      <PanValue defaultValue="0" aria-label={`${c.name} パン値`} />
    </Cell>
    <FaderCell>
      <GainScale />
      <Fader type="range" min={0} max={108} defaultValue={89} aria-label={`${c.name} 音量`} />
      <Meter levels={c.levels} />
      <MeterScale />
    </FaderCell>
    <Cell $gap={6}>
      <SmallToggle $on={c.muted} aria-pressed={!!c.muted}>M</SmallToggle>
      {c.solo && <SmallToggle aria-pressed={false}>S</SmallToggle>}
    </Cell>
    <ChannelName $pink={c.pink}>{c.name}</ChannelName>
  </Channel>
);

const menus = ["ファイル(F)", "編集(E)", "表示(V)", "追加(A)", "フォーマット(O)", "ツール(T)", "プラグイン(P)", "ヘルプ(H)"];
const mixerRows = ["サウンド", "オーディオFX", "Aux センド", "パン", "", "", "名前"];

export default function App() {
  return (
    <App_>
      <Global />
      <ThreePart $h={32}>
        <MenuList>{menus.map((m) => <MenuItem key={m}>{m}</MenuItem>)}</MenuList>
        <span>うぇぶまにまに.mid</span>
        <WindowButtons>
          <WindowButton aria-label="最小化"><Svg w={12}><path d="M-5 0H5" /></Svg></WindowButton>
          <WindowButton aria-label="元に戻す"><Svg w={12}><path d="M-4.500-2.500H2.500V4.500H-4.500ZM-2.500-2.500V-4.500H4.500V2.500H2.500" /></Svg></WindowButton>
          <WindowButton aria-label="閉じる"><Cross /></WindowButton>
        </WindowButtons>
      </ThreePart>
      <ThreePart $h={37} $line>
        <PageTabs>
          <PageTab href="#home">ホーム</PageTab>
          <PageTab href="#score" $on>スコア</PageTab>
          <PageTab href="#publish">公開</PageTab>
        </PageTabs>
        <PanelToggles>
          <PanelToggle>
            <Svg w={16} h={20}><path d="M-6.500-8.500H6.500V8.500H-6.500ZM-3.500-5H3.500M-3.500-1.700H3.500M-3.500 1.700H3.500M-3.500 5H3.500" /></Svg>
            パート
          </PanelToggle>
          <PanelToggle>
            <Svg w={20}><path d="M-7-8V0M-7 5V8M0-8V-5M0 0V8M7-8V0M7 5V8" /><circle cx="-7" cy="2.500" r="2.200" /><circle cy="-2.500" r="2.200" /><circle cx="7" cy="2.500" r="2.200" /></Svg>
            ミキサー
          </PanelToggle>
        </PanelToggles>
        <Transport>
          <TransportButton $w={24} aria-label="移動"><Grip /></TransportButton>
          <TransportButton aria-label="先頭へ"><Svg w={20}><path d="M5-7V7L-8 0ZM8.500-7V7" /></Svg></TransportButton>
          <TransportButton aria-label="一時停止"><Svg w={18}><path d="M-6.500-6.500H-2V6.500H-6.500ZM2-6.500H6.500V6.500H2Z" /></Svg></TransportButton>
          <TransportButton aria-label="ループ"><Svg w={20}><path d="M-4-6.500H7.500V5.500H5M-1.500-9L-4-6.500L-1.500-4M-5-6.500H-7.500V6.500H4M1.500 4L4 6.500L1.500 9" /></Svg></TransportButton>
          <TransportButton aria-label="メトロノーム"><Svg w={20}><path d="M4-7.500H-3L-7 7H7L5 0M-1 3L7.500-7.500M-5.500 3H1" /></Svg></TransportButton>
          <TransportButton aria-label="再生設定"><Gear r={9} /></TransportButton>
          <Rule />
          <Readout $w={89}>0:00:03:3</Readout>
          <Readout $w={53}>3 . 4</Readout>
          <Readout $w={71}>
            <svg width="8" height="18" viewBox="0 0 8 18" fill={ink} aria-hidden><ellipse cx="3.200" cy="15" rx="3" ry="2.200" transform="rotate(-24 3.200 15)" /><rect x="5.200" y="1" width="1" height="14" /></svg>
            = 200
          </Readout>
          <Rule $after={7} />
          <TransportButton $w={30} $off aria-label="元に戻す操作"><Svg w={20} sw={1.6}><path d="M-8-4V2H-2M-8 2A8 7 0 1 1 3 6.500" /></Svg></TransportButton>
          <TransportButton $w={30} $off aria-label="やり直し"><Svg w={20} sw={1.6}><path d="M8-4V2H2M8 2A8 7 0 1 0-3 6.500" /></Svg></TransportButton>
        </Transport>
      </ThreePart>

      <Toolbar>
        {tools.map((g, i) => (
          <ToolGroup key={i} $last={i === tools.length - 1}>
            {i === 0 && <ToolButton $narrow aria-label="ツールバー移動"><Grip /></ToolButton>}
            {g.map((t) => <ToolButton key={t.name} aria-label={t.name}>{t.icon}</ToolButton>)}
          </ToolGroup>
        ))}
      </Toolbar>

      <Work>
        <Side>
          <TabBar $h={35}>
            <Tab $w={56}>パレット</Tab>
            <Tab $w={88} $on>レイアウト<Dots /></Tab>
            <Tab $w={65}>プロパティ</Tab>
          </TabBar>
          <SideActions>
            <AddButton>追加</AddButton>
            <SquareButton $off aria-label="上へ"><Svg w={16}><path d="M0 6V-6M-2.500-3.500L0-6L2.500-3.500" /></Svg></SquareButton>
            <SquareButton $off aria-label="下へ"><Svg w={16}><path d="M0-6V6M-2.500 3.500L0 6L2.500 3.500" /></Svg></SquareButton>
            <SquareButton $off aria-label="削除"><Svg w={16}><path d="M-5-4H5M-4-4V6H4V-4M-2-4V-6H2V-4M-1.500-1V3M1.500-1V3" /></Svg></SquareButton>
          </SideActions>
          <LayerRow>
            <RowIcon $w={32} aria-label="テンポの表示"><Svg w={20} sw={1}><path d="M-6 0H7" /></Svg></RowIcon>
            <LayerName>テンポ</LayerName>
            <SquareButton aria-label="テンポ設定"><Gear /></SquareButton>
          </LayerRow>
          <LayerRow>
            <RowIcon $w={40} aria-label="表示切替"><Svg w={20}><path d="M-8 0C-4-7 4-7 8 0C4 7-4 7-8 0Z" /><circle r="2.600" /></Svg></RowIcon>
            <RowIcon $w={21} aria-label="展開"><svg width="6" height="8" viewBox="0 0 6 8" fill={ink}><path d="M0 0L5 4L0 8Z" /></svg></RowIcon>
            <LayerName $bold>ピアノ, HALion Sonic 02</LayerName>
            <SquareButton aria-label="ピアノ設定"><Gear /></SquareButton>
          </LayerRow>
        </Side>
        <Editor>
          <TabBar $h={27}>
            <DocumentTab $w={131}>*うぇぶまにまに.mid<Cross /></DocumentTab>
          </TabBar>
          <Desk>
            <Paper><ScorePageOne /></Paper>
            <Paper $rest><ScorePageTwo /></Paper>
          </Desk>
        </Editor>
      </Work>

      <MixerPanel>
        <TabBar $h={35}><Tab $w={78} $on>ミキサー<Dots /></Tab></TabBar>
        <MixerBody>
          <Labels>{mixerRows.map((r, i) => <span key={i}>{r}</span>)}</Labels>
          {channels.map((c) => <ChannelStrip key={c.name} c={c} />)}
        </MixerBody>
      </MixerPanel>

      <Status>
        <StatusPart $w={147} $gap={0}>ワークスペース: Default</StatusPart>
        <StatusPart $w={91} $gap={8}>
          <Swatch />
          <Svg w={10} h={20}><path d="M-4-8V-3C-4 2 4 2 4-3V-8M0 1V8" /></Svg>
          実音
        </StatusPart>
        <StatusPart $w={248} $gap={16}>
          <DropLabel $gap={6}>
            <Svg w={12} h={18}><path d="M-5-7.500H5V7.500H-5Z" /></Svg>
            <Drop aria-label="表示モード"><option>ページビュー</option></Drop>
            <Caret />
          </DropLabel>
          <TransportButton $w={18} aria-label="縮小"><Svg w={18}><circle cx="-1.500" cy="-1.500" r="6" /><path d="M3 3L8 8M-4.500-1.500H1.500" /></Svg></TransportButton>
          <TransportButton $w={18} aria-label="拡大"><Svg w={18}><circle cx="-1.500" cy="-1.500" r="6" /><path d="M3 3L8 8M-4.500-1.500H1.500M-1.500-4.500V1.500" /></Svg></TransportButton>
          <DropLabel $gap={10}>
            <Drop aria-label="倍率"><option>100%</option></Drop>
            <Caret />
          </DropLabel>
        </StatusPart>
      </Status>
    </App_>
  );
}
